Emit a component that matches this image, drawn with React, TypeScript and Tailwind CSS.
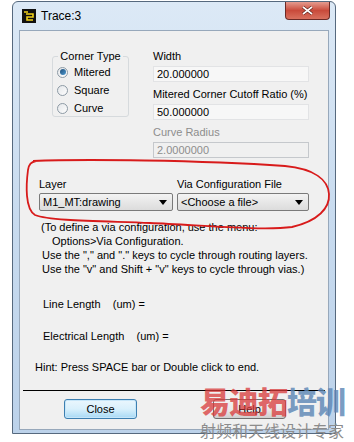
import React from 'react';

const font = "font-['Liberation_Sans',Arial,sans-serif]";

function Radio({ label, checked }: { label: string; checked?: boolean }) {
  return (
    <div className="flex h-[18px] items-center gap-[6px] pl-[2px]">
      <span className="flex h-[11px] w-[11px] items-center justify-center rounded-full border border-[#8d9aa5] bg-gradient-to-br from-[#e4e7ea] to-[#fdfdfd]">
        {checked && <span className="h-[6px] w-[6px] rounded-full bg-gradient-to-br from-[#1f4e7a] to-[#4f9bd1]" />}
      </span>
      <span>{label}</span>
    </div>
  );
}

function Field({ label, value, disabled }: { label: string; value: string; disabled?: boolean }) {
  return (
    <div className="flex flex-col">
      <span className={`h-[14px] whitespace-nowrap leading-[14px] ${disabled ? 'text-[#8d8d8d]' : ''}`}>{label}</span>
      <div
        className={`mt-[3px] flex h-[16px] items-center border pl-[3px] ${
          disabled ? 'border-[#c5c8cc] bg-[#f0f0f0] text-[#8d8d8d]' : 'border-[#e2e3e5] bg-[#f7f7f7]'
        }`}
      >
        {value}
      </div>
    </div>
  );
}

function Select({ value, width }: { value: string; width: string }) {
  return (
    <div className={`flex h-[18px] items-center justify-between rounded-[2px] border border-[#7a7a7a] bg-gradient-to-b from-[#f3f3f3] to-[#dcdcdc] pl-[3px] pr-[5px] ${width}`}>
      <span>{value}</span>
      <svg width="8" height="5" viewBox="0 0 8 5">
        <path d="M0 0 H8 L4 5 Z" fill="#000" />
      </svg>
    </div>
  );
}

export default function App() {
  return (
    <div className={`relative h-[442px] w-[354px] overflow-hidden bg-white text-[11px] text-black ${font}`}>
      {/* window frame */}
      <div className="ml-[12px] mt-[1px] flex h-[433px] w-[324px] flex-col rounded-t-[6px] border border-[#56697e] bg-gradient-to-b from-[#dce9f6] via-[#c8dbef] to-[#bcd2ea]">
        <div className="flex h-[28px] items-start">
          <div className="mt-[7px] ml-[9px] flex items-center gap-[5px]">
            <svg width="14" height="14" viewBox="0 0 14 14">
              <rect width="14" height="14" fill="#111" />
              <path d="M2 3 H6 M4 5 H11 V8 H5 V11 H11" stroke="#f2d21b" strokeWidth="1.6" fill="none" />
            </svg>
            <span className="text-[12px] leading-[14px]">Trace:3</span>
          </div>
          <div className="ml-auto mr-[5px] flex h-[18px] w-[45px] items-center justify-center rounded-b-[4px] border border-t-0 border-[#6b2a26] bg-gradient-to-b from-[#e49b8f] via-[#c94a3b] to-[#d9705e]">
            <svg width="11" height="9" viewBox="0 0 11 9">
              <path d="M1 1 L10 8 M10 1 L1 8" stroke="#5a2018" strokeWidth="3" />
              <path d="M1 1 L10 8 M10 1 L1 8" stroke="#fff" strokeWidth="1.6" />
            </svg>
          </div>
        </div>

        {/* client area */}
        <div className="mx-[6px] flex h-[400px] flex-col border border-[#97a8bb] bg-[#f0f0f0]">
          <div className="flex pl-[32px] pt-[18px]">
            <fieldset className="h-[68px] w-[77px] rounded-[3px] border border-[#d6dadd] px-[2px]">
              <legend className="mx-auto whitespace-nowrap px-[2px] leading-[14px]">Corner Type</legend>
              <Radio label="Mitered" checked />
              <Radio label="Square" />
              <Radio label="Curve" />
            </fieldset>
            <div className="ml-[24px] flex w-[156px] flex-col gap-[5px]">
              <Field label="Width" value="20.000000" />
              <Field label="Mitered Corner Cutoff Ratio (%)" value="50.000000" />
              <Field label="Curve Radius" value="2.0000000" disabled />
            </div>
          </div>

          <div className="mt-[19px] flex gap-[4px] pl-[19px]">
            <div className="flex flex-col gap-[2px]">
              <span className="leading-[14px]">Layer</span>
              <Select value="M1_MT:drawing" width="w-[134px]" />
            </div>
            <div className="flex flex-col gap-[2px]">
              <span className="leading-[14px]">Via Configuration File</span>
              <Select value="<Choose a file>" width="w-[132px]" />
            </div>
          </div>

          <div className="mt-[9px] flex flex-col whitespace-nowrap leading-[14px]">
            <span className="pl-[21px]">(To define a via configuration, use the menu:</span>
            <span className="pl-[32px]">Options&gt;Via Configuration.</span>
            <span className="pl-[22px]">Use the "," and "." keys to cycle through routing layers.</span>
            <span className="pl-[22px]">Use the "v" and Shift + "v" keys to cycle through vias.)</span>
          </div>

          <div className="mt-[21px] pl-[23px] leading-[14px]">
            Line Length&nbsp;&nbsp;&nbsp;&nbsp;(um) =
          </div>
          <div className="mt-[18px] pl-[23px] leading-[14px]">
            Electrical Length&nbsp;&nbsp;&nbsp;&nbsp;(um) =
          </div>
          <div className="mt-[17px] pl-[15px] leading-[14px]">
            Hint: Press SPACE bar or Double click to end.
          </div>

          <div className="mx-[3px] mt-[16px] h-px bg-black" />

          <div className="mt-[8px] flex gap-[76px] pl-[44px]">
            <button className="h-[20px] w-[73px] rounded-[3px] border border-[#3c7fb1] bg-gradient-to-b from-[#eaf6fd] via-[#d9f0fc] to-[#a7d9f5] shadow-[inset_0_0_0_1px_#c7e6f9]">
              Close
            </button>
            <button className="h-[20px] w-[73px] rounded-[3px] border border-[#707070] bg-gradient-to-b from-[#f2f2f2] via-[#ebebeb] to-[#cfcfcf]">
              Help
            </button>
          </div>
        </div>
      </div>

      {/* hand drawn red marking */}
      <svg className="pointer-events-none absolute left-0 top-0" width="354" height="442">
        <path
          d="M33 161 C80 159, 200 160, 285 166 C315 169, 328 180, 329 194 C330 208, 318 221, 292 227 C262 231, 200 225, 150 223 C100 221, 50 221, 35 215 C25 209, 26 185, 28 170 C29 164, 31 162, 36 161"
          stroke="#d81b1b"
          strokeWidth="1.8"
          fill="none"
        />
      </svg>

      {/* watermark */}
      <div className="pointer-events-none absolute left-[200px] top-[383px] flex flex-col items-start font-['Noto_Sans_CJK_SC',sans-serif]">
        <div className="flex text-[30px] font-black leading-[34px] tracking-[-1px]">
          <span className="text-[#d93a3a] opacity-75">易迪拓</span>
          <span className="text-[#5b85b5] opacity-80">培训</span>
        </div>
        <div className="mt-[4px] text-[16px] leading-[18px] text-[#8c8c8c]">射频和天线设计专家</div>
      </div>
    </div>
  );
}
